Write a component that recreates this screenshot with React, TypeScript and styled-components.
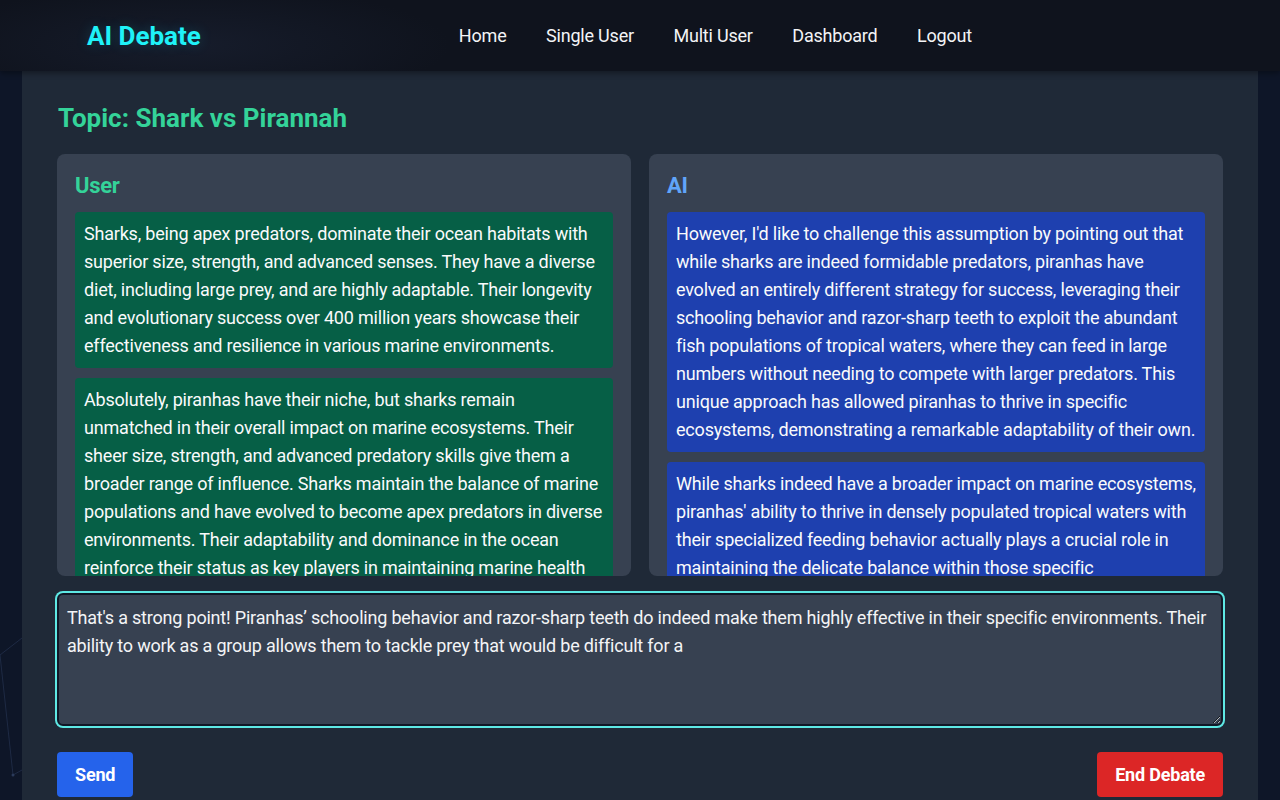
import * as React from 'react';
import styled, { createGlobalStyle } from 'styled-components';

const GlobalStyle = createGlobalStyle`
  html, body {
    margin: 0;
    padding: 0;
    background: #0f172a;
    font-family: Roboto, "Liberation Sans", sans-serif;
    color: #ffffff;
  }
  * {
    box-sizing: border-box;
  }
`;

const Page = styled.div`
  position: relative;
  min-height: 800px;
  overflow: hidden;
  background: #0e1628;
`;

const Backdrop = styled.svg`
  position: absolute;
  left: 0;
  top: 560px;
  width: 40px;
  height: 240px;
  pointer-events: none;
`;

const Navbar = styled.header`
  position: relative;
  height: 71px;
  display: flex;
  align-items: center;
  padding-left: 87px;
  background: radial-gradient(ellipse 260px 60px at 190px 45px, #161c2b 0%, #0f131d 100%);
  box-shadow: 0 2px 6px rgba(0, 0, 0, 0.4);
  z-index: 1;
`;

const Logo = styled.div`
  font-size: 26px;
  font-weight: 700;
  color: #1ff2f8;
  text-shadow: 0 0 14px rgba(34, 211, 238, 0.2);
`;

const NavLinks = styled.nav`
  display: flex;
  gap: 39.5px;
  margin-left: 258px;
`;

const NavLink = styled.a`
  font-size: 18px;
  letter-spacing: -0.2px;
  color: #f3f4f6;
  text-decoration: none;
  cursor: pointer;
`;

const Main = styled.main`
  position: relative;
  width: 1236px;
  min-height: 729px;
  margin: 0 auto;
  padding: 31px 35px 0;
  background: #1f2937;
`;

const Topic = styled.h1`
  margin: 0 0 20px 1px;
  font-size: 26px;
  line-height: 32px;
  font-weight: 700;
  color: #34d399;
`;

const Columns = styled.div`
  display: grid;
  grid-template-columns: 1fr 1fr;
  gap: 18px;
`;

const Panel = styled.section`
  height: 422px;
  overflow: hidden;
  padding: 18px 18px 0;
  background: #374151;
  border-radius: 8px;
`;

const PanelTitle = styled.h2<{ $color: string }>`
  margin: 0 0 12px;
  font-size: 22px;
  line-height: 28px;
  font-weight: 700;
  letter-spacing: -0.3px;
  color: ${p => p.$color};
`;

const Bubble = styled.div<{ $bg: string }>`
  margin-bottom: 10px;
  padding: 8px 9px;
  font-size: 18px;
  line-height: 28px;
  letter-spacing: -0.2px;
  color: #f9fafb;
  background: ${p => p.$bg};
  border-radius: 4px;
`;

const Input = styled.textarea`
  display: block;
  width: 100%;
  height: 133px;
  margin-top: 17px;
  padding: 9px 8px;
  font-family: Roboto, "Liberation Sans", sans-serif;
  font-size: 18px;
  line-height: 28px;
  letter-spacing: -0.2px;
  color: #f3f4f6;
  background: #374151;
  border: 2px solid #111827;
  border-radius: 6px;
  box-shadow: 0 0 0 2px #5ee8e4;
  outline: none;
  resize: vertical;
`;

const Actions = styled.div`
  display: flex;
  justify-content: space-between;
  margin-top: 26px;
`;

const Button = styled.button<{ $bg: string }>`
  height: 45px;
  padding: 0 18px;
  font-family: Roboto, "Liberation Sans", sans-serif;
  font-size: 18px;
  font-weight: 700;
  letter-spacing: -0.2px;
  color: #ffffff;
  background: ${p => p.$bg};
  border: none;
  border-radius: 4px;
  cursor: pointer;
`;

const userMessages = [
  'Sharks, being apex predators, dominate their ocean habitats with superior size, strength, and advanced senses. They have a diverse diet, including large prey, and are highly adaptable. Their longevity and evolutionary success over 400 million years showcase their effectiveness and resilience in various marine environments.',
  'Absolutely, piranhas have their niche, but sharks remain unmatched in their overall impact on marine ecosystems. Their sheer size, strength, and advanced predatory skills give them a broader range of influence. Sharks maintain the balance of marine populations and have evolved to become apex predators in diverse environments. Their adaptability and dominance in the ocean reinforce their status as key players in maintaining marine health and biodiversity.',
];

const aiMessages = [
  "However, I'd like to challenge this assumption by pointing out that while sharks are indeed formidable predators, piranhas have evolved an entirely different strategy for success, leveraging their schooling behavior and razor-sharp teeth to exploit the abundant fish populations of tropical waters, where they can feed in large numbers without needing to compete with larger predators. This unique approach has allowed piranhas to thrive in specific ecosystems, demonstrating a remarkable adaptability of their own.",
  "While sharks indeed have a broader impact on marine ecosystems, piranhas' ability to thrive in densely populated tropical waters with their specialized feeding behavior actually plays a crucial role in maintaining the delicate balance within those specific environments, keeping prey populations in check.",
];

const draft =
  'That\'s a strong point! Piranhas\u2019 schooling behavior and razor-sharp teeth do indeed make them highly effective in their specific environments. Their ability to work as a group allows them to tackle prey that would be difficult for a ';

const App: React.FC = () => {
  return (
    <>
      <GlobalStyle />
      <Page>
        <Backdrop viewBox="0 0 40 240">
          <g stroke="#1e2a44" strokeWidth="1" fill="none">
            <line x1="0" y1="95" x2="22" y2="78" />
            <line x1="0" y1="95" x2="13" y2="215" />
            <line x1="13" y1="215" x2="40" y2="200" />
            <line x1="22" y1="78" x2="40" y2="70" />
          </g>
          <circle cx="13" cy="215" r="1.5" fill="#2b3a5a" />
        </Backdrop>
        <Navbar>
          <Logo>AI Debate</Logo>
          <NavLinks>
            <NavLink>Home</NavLink>
            <NavLink>Single User</NavLink>
            <NavLink>Multi User</NavLink>
            <NavLink>Dashboard</NavLink>
            <NavLink>Logout</NavLink>
          </NavLinks>
        </Navbar>
        <Main>
          <Topic>Topic: Shark vs Pirannah</Topic>
          <Columns>
            <Panel>
              <PanelTitle $color="#34d399">User</PanelTitle>
              {userMessages.map((m, i) => (
                <Bubble key={i} $bg="#065f46">{m}</Bubble>
              ))}
            </Panel>
            <Panel>
              <PanelTitle $color="#60a5fa">AI</PanelTitle>
              {aiMessages.map((m, i) => (
                <Bubble key={i} $bg="#1e40af">{m}</Bubble>
              ))}
            </Panel>
          </Columns>
          <Input defaultValue={draft} spellCheck={false} />
          <Actions>
            <Button $bg="#2563eb">Send</Button>
            <Button $bg="#dc2626">End Debate</Button>
          </Actions>
        </Main>
      </Page>
    </>
  );
};

export default App;
